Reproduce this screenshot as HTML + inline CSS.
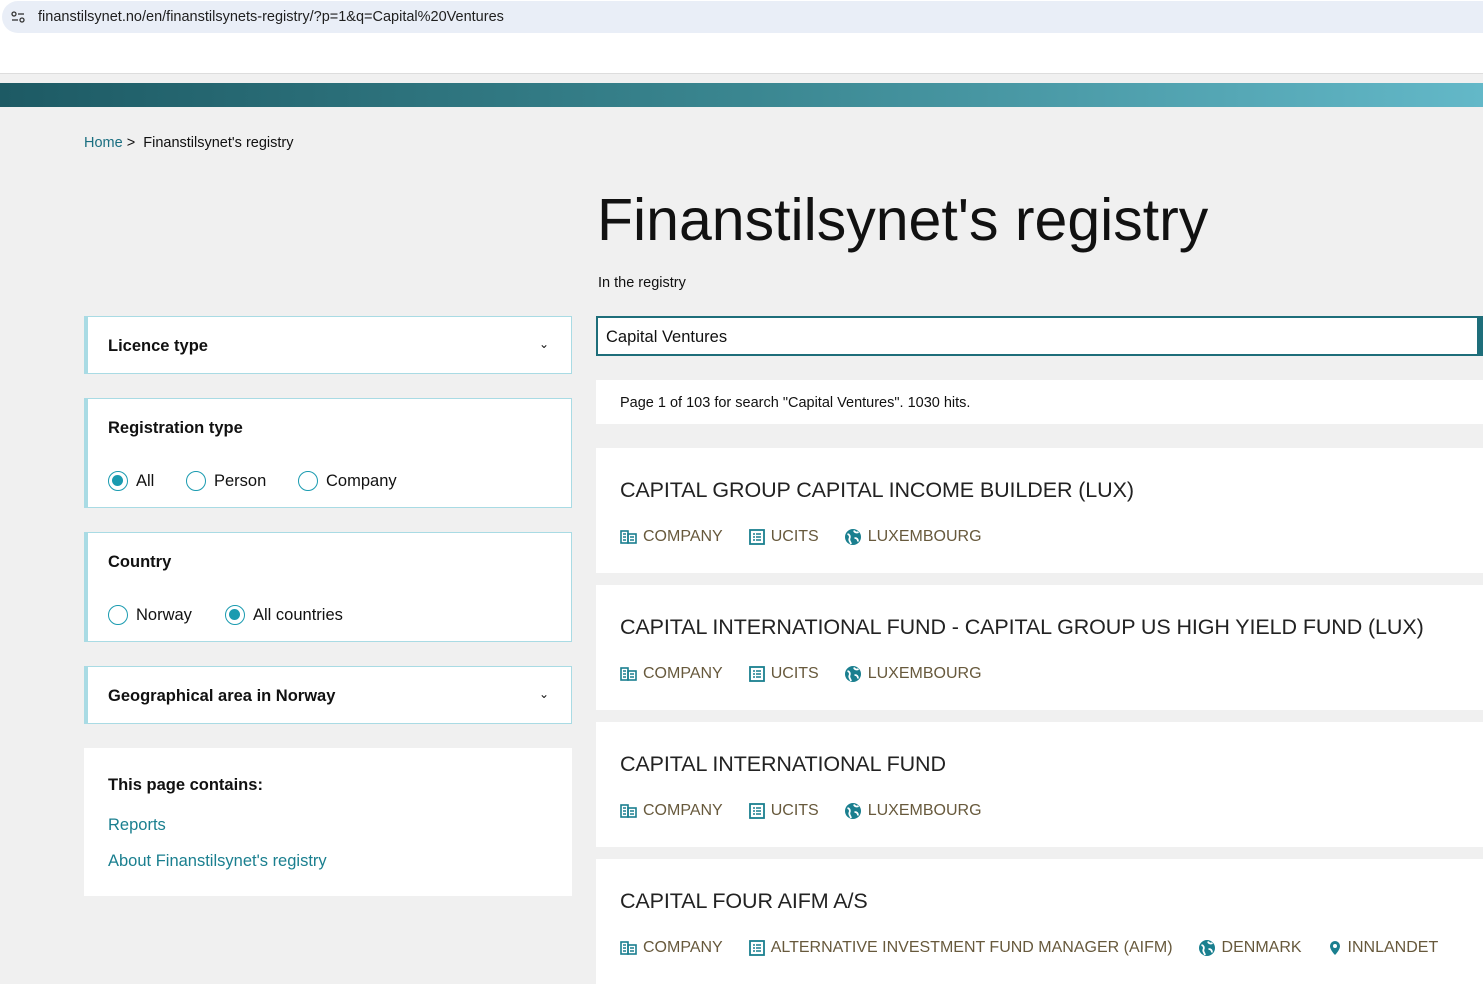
<!DOCTYPE html>
<html><head><meta charset="utf-8"><style>
*{box-sizing:border-box;margin:0;padding:0}
body{width:1483px;height:980px;overflow:hidden;background:#f0f0f0;font-family:"Liberation Sans",sans-serif;color:#111;position:relative}
.url{position:absolute;left:0;top:0;width:1483px;height:34px;background:#fff}
.urlbar{position:absolute;left:2px;top:1px;width:1481px;height:32px;background:#e9eef7;border-radius:16px 0 0 16px}
.urlbar span{position:absolute;left:36px;top:8px;font-size:14.5px;color:#1f1f1f}
.white{position:absolute;top:34px;left:0;width:1483px;height:40px;background:#fff;border-bottom:1px solid #ddd}
.band{position:absolute;top:83px;left:0;width:1483px;height:24px;background:linear-gradient(90deg,#1d5a64,#3a8690 50%,#63b8c8)}
.abs{position:absolute}
.card{position:absolute;left:84px;width:488px;background:#fff;border:1px solid #a9dbe4;border-left:4px solid #a9dbe4}
.card h3{font-size:16.5px;font-weight:bold;position:absolute;left:20px}
.radio{position:absolute;font-size:16.5px;display:flex;align-items:center}
.radio i{display:inline-block;width:20px;height:20px;border:1.5px solid #1a9bb0;border-radius:50%;margin-right:8px;position:relative}
.radio i.on:after{content:"";position:absolute;left:3px;top:3px;width:11px;height:11px;border-radius:50%;background:#1a9bb0}
.chev{position:absolute;right:22px;font-size:12px}
.res{position:absolute;left:596px;width:887px;background:#fff}
.res h2{position:absolute;left:24px;top:30px;font-size:21.5px;font-weight:normal;color:#222;white-space:nowrap;letter-spacing:-.1px}
.tags{position:absolute;left:24px;top:80px;display:flex;font-size:16px;color:#67593c;white-space:nowrap}
.tags span{display:flex;align-items:center;margin-right:26px}
.tags svg{margin-right:6px}
</style></head><body>
<div class="url"><div class="urlbar"><svg class="abs" style="left:9px;top:10px" width="14" height="12" viewBox="0 0 14 12"><circle cx="3" cy="3" r="2" fill="none" stroke="#333" stroke-width="1.3"/><line x1="7" y1="3" x2="13" y2="3" stroke="#333" stroke-width="1.3"/><line x1="1" y1="9" x2="7" y2="9" stroke="#333" stroke-width="1.3"/><circle cx="11" cy="9" r="2" fill="none" stroke="#333" stroke-width="1.3"/></svg><span>finanstilsynet.no/en/finanstilsynets-registry/?p=1&amp;q=Capital%20Ventures</span></div></div>
<div class="white"></div>
<div class="band"></div>
<div class="abs" style="left:84px;top:135px;font-size:14.5px"><span style="color:#1a6e80">Home</span> &gt;&nbsp; <span>Finanstilsynet's registry</span></div>
<div class="abs" style="left:597px;top:186px;font-size:59px;color:#111">Finanstilsynet's registry</div>
<div class="abs" style="left:598px;top:275px;font-size:14.5px">In the registry</div>
<div class="abs" style="left:596px;top:316px;width:887px;height:40px;background:#fff;border:2px solid #1e6e7a;border-right:6px solid #1e6e7a;font-size:16.5px;padding:10px 8px 0">Capital Ventures</div>
<div class="abs" style="left:596px;top:380px;width:887px;height:44px;background:#fff;font-size:14.5px;padding:15px 24px 0">Page 1 of 103 for search "Capital Ventures". 1030 hits.</div>

<div class="card" style="top:316px;height:58px"><h3 style="top:20px">Licence type</h3><span class="chev" style="top:20px">&#8964;</span></div>
<div class="card" style="top:398px;height:110px"><h3 style="top:20px">Registration type</h3>
<div class="radio" style="left:20px;top:72px"><i class="on"></i>All</div>
<div class="radio" style="left:98px;top:72px"><i></i>Person</div>
<div class="radio" style="left:210px;top:72px"><i></i>Company</div></div>
<div class="card" style="top:532px;height:110px"><h3 style="top:20px">Country</h3>
<div class="radio" style="left:20px;top:72px"><i></i>Norway</div>
<div class="radio" style="left:137px;top:72px"><i class="on"></i>All countries</div></div>
<div class="card" style="top:666px;height:58px"><h3 style="top:20px">Geographical area in Norway</h3><span class="chev" style="top:20px">&#8964;</span></div>
<div class="abs" style="left:84px;top:748px;width:488px;height:148px;background:#fff">
<div class="abs" style="left:24px;top:28px;font-size:16.5px;font-weight:bold">This page contains:</div>
<div class="abs" style="left:24px;top:68px;font-size:16.5px;color:#1a7f8f">Reports</div>
<div class="abs" style="left:24px;top:104px;font-size:16.5px;color:#1a7f8f">About Finanstilsynet's registry</div></div>

<svg width="0" height="0" style="position:absolute"><defs>
<g id="co"><rect x="1" y="2" width="7" height="12" fill="none" stroke="#1a7f8f" stroke-width="1.6"/><rect x="8" y="5" width="8" height="9" fill="none" stroke="#1a7f8f" stroke-width="1.6"/><path d="M3 5h3M3 8h3M3 11h3M10 8h4M10 11h4" stroke="#1a7f8f" stroke-width="1.4"/></g>
<g id="li"><rect x="1" y="1" width="14" height="14" fill="none" stroke="#1a7f8f" stroke-width="1.8"/><path d="M4 5h2M7 5h5M4 8h2M7 8h5M4 11h2M7 11h5" stroke="#1a7f8f" stroke-width="1.5"/></g>
<g id="gl"><circle cx="8" cy="8" r="8" fill="#1a7f8f"/><path d="M2.5 5c2 0.5 3 2.5 2 4.5s1 3 1.5 5.5M9 1.5c0.5 2 3 2.5 4.5 1.5M9.5 9c2 0 3.5 1 3.5 3.5" stroke="#fff" stroke-width="1.8" fill="none"/></g>
<g id="pin"><path d="M7 1a5 5 0 0 1 5 5c0 4-5 9-5 9s-5-5-5-9a5 5 0 0 1 5-5z" fill="#1a7f8f"/><circle cx="7" cy="6" r="2" fill="#fff"/></g>
</defs></svg>

<div class="res" style="top:448px;height:125px"><h2>CAPITAL GROUP CAPITAL INCOME BUILDER (LUX)</h2><div class="tags"><span><svg width="17" height="16"><use href="#co"/></svg>COMPANY</span><span><svg width="16" height="16"><use href="#li"/></svg>UCITS</span><span><svg width="17" height="16"><use href="#gl"/></svg>LUXEMBOURG</span></div></div>
<div class="res" style="top:585px;height:125px"><h2>CAPITAL INTERNATIONAL FUND - CAPITAL GROUP US HIGH YIELD FUND (LUX)</h2><div class="tags"><span><svg width="17" height="16"><use href="#co"/></svg>COMPANY</span><span><svg width="16" height="16"><use href="#li"/></svg>UCITS</span><span><svg width="17" height="16"><use href="#gl"/></svg>LUXEMBOURG</span></div></div>
<div class="res" style="top:722px;height:125px"><h2>CAPITAL INTERNATIONAL FUND</h2><div class="tags"><span><svg width="17" height="16"><use href="#co"/></svg>COMPANY</span><span><svg width="16" height="16"><use href="#li"/></svg>UCITS</span><span><svg width="17" height="16"><use href="#gl"/></svg>LUXEMBOURG</span></div></div>
<div class="res" style="top:859px;height:125px"><h2>CAPITAL FOUR AIFM A/S</h2><div class="tags"><span><svg width="17" height="16"><use href="#co"/></svg>COMPANY</span><span><svg width="16" height="16"><use href="#li"/></svg>ALTERNATIVE INVESTMENT FUND MANAGER (AIFM)</span><span><svg width="17" height="16"><use href="#gl"/></svg>DENMARK</span><span><svg width="14" height="16"><use href="#pin"/></svg>INNLANDET</span></div></div>
</body></html>
